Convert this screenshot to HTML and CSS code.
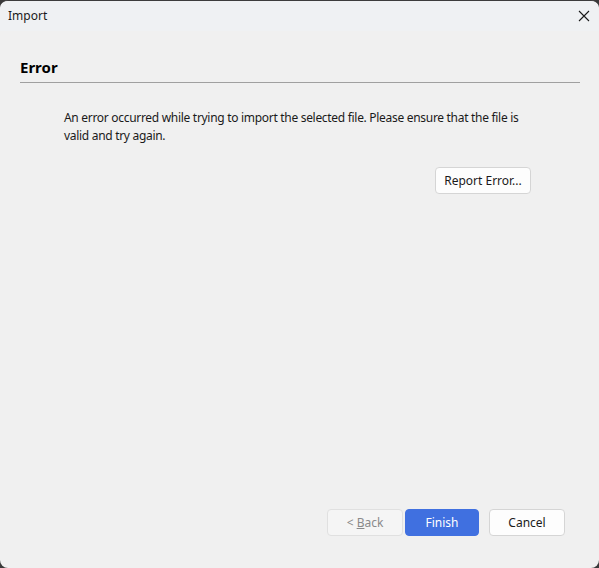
FILE: index.html
```html
<!DOCTYPE html>
<html>
<head>
<meta charset="utf-8">
<link rel="stylesheet" href="styles.css">
</head>
<body>
<div class="window">
  <div class="titlebar">
    <span class="title">Import</span>
    <svg class="close" width="12" height="12" viewBox="0 0 12 12"><path d="M1 1L11 11M11 1L1 11" stroke="#1a1a1a" stroke-width="1.1" fill="none"/></svg>
  </div>
  <div class="content">
    <h1 class="heading">Error</h1>
    <div class="rule"></div>
    <p class="message">An error occurred while trying to import the selected file. Please ensure that the file is valid and try again.</p>
    <div class="report-row"><button class="btn report">Report Error...</button></div>
    <div class="spacer"></div>
    <div class="footer">
      <button class="btn back" disabled>&lt; <u>B</u>ack</button>
      <button class="btn primary">Finish</button>
      <button class="btn cancel">Cancel</button>
    </div>
  </div>
</div>
</body>
</html>
```
FILE: styles.css
```css
html, body {
  margin: 0;
  padding: 0;
  background: #3a3a3a;
  width: 599px;
  height: 568px;
  overflow: hidden;
}
.window {
  width: 599px;
  height: 568px;
  box-sizing: border-box;
  background: #f0f0f0;
  border-radius: 8px;
  border-top: 1px solid #3c3c3c;
  overflow: hidden;
  display: flex;
  flex-direction: column;
  font-family: "Noto Sans", "Open Sans", sans-serif;
  font-size: 12px;
  color: #1a1a1a;
}
.titlebar {
  height: 30px;
  background: #eff1f3;
  display: flex;
  align-items: center;
  justify-content: space-between;
  padding: 0 8px 2px 8px;
  box-sizing: border-box;
  flex-shrink: 0;
}
.title {
  font-size: 12px;
  color: #1a1a1a;
}
.close {
  margin-right: 1px;
  margin-top: 2px;
}
.content {
  flex: 1;
  display: flex;
  flex-direction: column;
  padding: 0 19px 0 20px;
}
.heading {
  margin: 25px 0 0 0;
  font-size: 15px;
  font-weight: bold;
  line-height: 22px;
  color: #000;
}
.rule {
  height: 1px;
  background: #a0a0a0;
  margin-top: 4px;
}
.message {
  margin: 26px 0 0 44px;
  width: 470px;
  line-height: 18px;
  font-size: 12px;
  letter-spacing: -0.3px;
  color: #1a1a1a;
}
.report-row {
  display: flex;
  justify-content: flex-end;
  margin-top: 22px;
  padding-right: 49px;
}
.btn {
  font-family: "Noto Sans", "Open Sans", sans-serif;
  font-size: 12px;
  height: 27px;
  border: 1px solid #d5d5d5;
  border-radius: 4px;
  background: #fdfdfd;
  color: #1a1a1a;
  padding: 0;
  box-sizing: border-box;
}
.report {
  width: 96px;
}
.spacer {
  flex: 1;
}
.footer {
  display: flex;
  justify-content: flex-end;
  padding-right: 15px;
  margin-bottom: 32px;
}
.back {
  width: 76px;
  background: #f5f5f5;
  color: #8a8a8a;
  border-color: #e0e0e0;
}
.back u {
  text-decoration: underline;
}
.primary {
  width: 74px;
  margin-left: 2px;
  background: #4070e0;
  border-color: #4070e0;
  color: #fff;
}
.cancel {
  width: 76px;
  margin-left: 10px;
}
```
